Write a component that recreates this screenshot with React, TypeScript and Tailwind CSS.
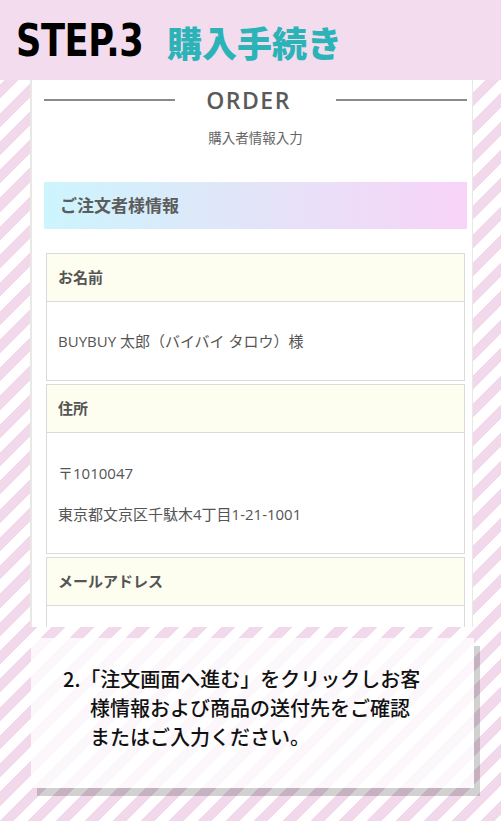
import React from "react";

const jp = { fontFamily: '"Open Sans", "Noto Sans CJK JP", sans-serif' };

function Block({ label, children, valueH }: { label: string; children: React.ReactNode; valueH: string }) {
  return (
    <div className="mx-[2px] mb-[3px]">
      <div className="h-[49px] border border-[#dadada] bg-[#fefef0] flex items-center pl-[11px] text-[15px] font-bold text-[#555]">
        {label}
      </div>
      <div className={`${valueH} border border-t-0 border-[#dadada] bg-white flex flex-col justify-center gap-[21px] pl-[11px] text-[15px] leading-[20px] text-[#555]`}>
        {children}
      </div>
    </div>
  );
}

export default function App() {
  return (
    <div
      className="relative w-[501px] h-[821px] overflow-hidden bg-[repeating-linear-gradient(135deg,#f1d8eb_0_10px,#ffffff_10px_20px)]"
      style={jp}
    >
      <header className="h-[80px] bg-[#f3dced] flex items-center pl-[16px] pt-[2px]">
        <span
          className="inline-block origin-left scale-x-[0.89] text-[44px] font-bold text-black leading-none tracking-[-0.5px]"
          style={{ fontFamily: '"DejaVu Sans Condensed", "DejaVu Sans", sans-serif' }}
        >
          STEP.3
        </span>
        <span
          className="ml-[8px] text-[35px] font-black text-[#2bb3b8] leading-none"
          style={{ fontFamily: '"Noto Sans CJK JP", sans-serif' }}
        >
          購入手続き
        </span>
      </header>

      <div className="ml-[30px] w-[443px] h-[547px] overflow-hidden bg-white border-l-2 border-r border-[#e8e8e4]">
        <div className="pl-[12px] pr-[5px] flex flex-col">
          <div className="mt-[6px] h-[28px] flex items-center">
            <div className="w-[131px] h-[2px] bg-[#8a8a8a]" />
            <div className="flex-1 flex justify-center pr-[14px]">
              <span
                className="text-[23px] font-semibold text-[#5a5a5a] tracking-[1.5px] leading-none"
                style={{ fontFamily: '"Open Sans", sans-serif' }}
              >
                ORDER
              </span>
            </div>
            <div className="w-[131px] h-[2px] bg-[#8a8a8a]" />
          </div>
          <div className="mt-[14px] h-[20px] flex items-center justify-center text-[13.5px] text-[#666]">
            購入者情報入力
          </div>
          <div className="mt-[34px] h-[47px] flex items-center pl-[16px] bg-[linear-gradient(90deg,#ccf5fd_0%,#e3e4f8_50%,#f8d3f8_100%)] text-[17px] font-bold text-[#5c5c5c]">
            ご注文者様情報
          </div>
          <div className="mt-[24px]">
            <Block label="お名前" valueH="h-[79px]">
              <div>BUYBUY 太郎（バイバイ タロウ）様</div>
            </Block>
            <Block label="住所" valueH="h-[121px]">
              <div>〒1010047</div>
              <div>東京都文京区千駄木4丁目1-21-1001</div>
            </Block>
            <Block label="メールアドレス" valueH="h-[79px]">
              <div />
            </Block>
          </div>
        </div>
      </div>

      <div className="mt-[11px] ml-[31px] w-[443px] h-[150px] bg-white/80 shadow-[6px_8px_0_rgba(0,0,0,0.18)] pt-[26px] pl-[32px]">
        <p
          className="pl-[27px] -indent-[27px] text-[20px] leading-[29px] font-medium text-[#111]"
          style={{ fontFamily: '"Noto Sans CJK JP", sans-serif' }}
        >
          2.「注文画面へ進む」をクリックしお客
          <br />
          様情報および商品の送付先をご確認
          <br />
          またはご入力ください。
        </p>
      </div>
    </div>
  );
}
